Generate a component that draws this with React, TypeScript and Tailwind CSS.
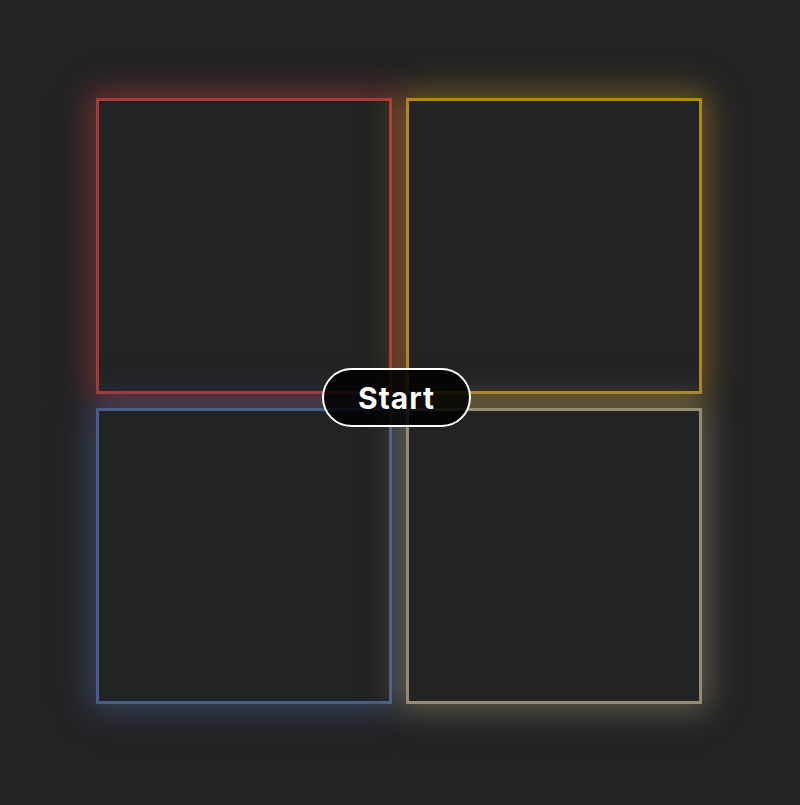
import React from "react";

export default function App() {
  return (
    <div className="w-[800px] h-[805px] bg-[#222324] flex items-start justify-start">
      <div className="relative ml-[96px] mt-[98px] grid grid-cols-[296px_296px] grid-rows-[296px_296px] gap-[14px]">
        <div className="border-[3px] border-[#a8393a] bg-[#222324] shadow-[0_0_30px_6px_rgba(168,57,58,0.6)]" />
        <div className="border-[3px] border-[#b08522] bg-[#222324] shadow-[0_0_30px_6px_rgba(176,133,34,0.55)]" />
        <div className="border-[3px] border-[#485c8a] bg-[#222324] shadow-[0_0_30px_6px_rgba(72,92,138,0.55)]" />
        <div className="border-[3px] border-[#958b6d] bg-[#222324] shadow-[0_0_30px_6px_rgba(149,139,109,0.55)]" />
        <div className="absolute left-[226px] top-[270px] w-[149px] h-[59px] rounded-full border-2 border-white bg-black/85 flex items-center justify-center">
          <span className="text-white text-[30px] leading-none font-bold tracking-[1px] font-['Inter',sans-serif]">Start</span>
        </div>
      </div>
    </div>
  );
}
